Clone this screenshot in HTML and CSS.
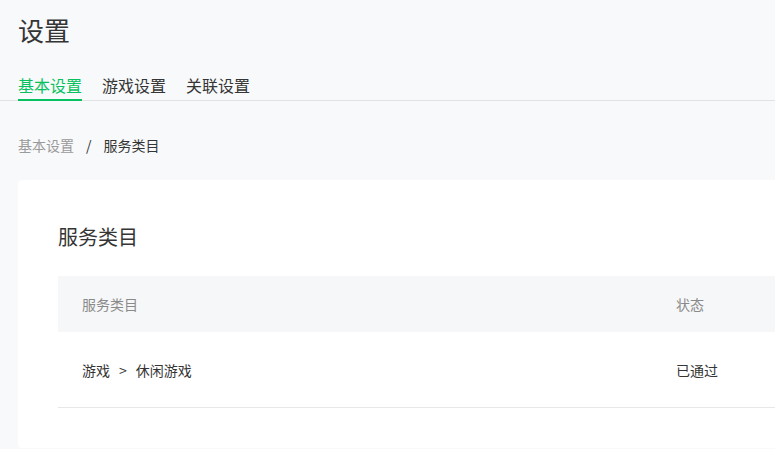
FILE: index.html
```html
<!DOCTYPE html>
<html lang="zh-CN">
<head>
<meta charset="utf-8">
<title>设置</title>
<link rel="stylesheet" href="styles.css">
</head>
<body>
<div class="page">
  <h1 class="page-title">设置</h1>
  <nav class="tabs">
    <a class="tab active">基本设置</a>
    <a class="tab">游戏设置</a>
    <a class="tab">关联设置</a>
  </nav>
  <div class="breadcrumb">
    <span class="crumb-link">基本设置</span>
    <span class="crumb-sep">/</span>
    <span class="crumb-current">服务类目</span>
  </div>
  <section class="card">
    <h2 class="card-title">服务类目</h2>
    <div class="table">
      <div class="row head">
        <div class="cell">服务类目</div>
        <div class="cell">状态</div>
      </div>
      <div class="row body">
        <div class="cell">游戏<span class="arrow">&gt;</span>休闲游戏</div>
        <div class="cell">已通过</div>
      </div>
    </div>
  </section>
</div>
</body>
</html>
```
FILE: styles.css
```css
html, body {
  margin: 0;
  padding: 0;
  background: #f8f9fa;
  overflow: hidden;
}
body {
  font-family: "Noto Sans CJK SC", "Noto Sans", sans-serif;
  color: #353535;
}
.page {
  width: 1000px;
  padding: 12px 0 0 18px;
}
.page-title {
  margin: 0;
  font-size: 26px;
  line-height: 36px;
  font-weight: 400;
  color: #353535;
}
.tabs {
  display: flex;
  gap: 20px;
  margin-top: 26px;
  margin-left: -18px;
  padding-left: 18px;
  border-bottom: 1px solid #e2e3e5;
}
.tab {
  font-size: 16px;
  line-height: 22px;
  padding-bottom: 3px;
  border-bottom: 2px solid transparent;
  margin-bottom: -1px;
  color: #353535;
}
.tab.active {
  color: #07c160;
  border-bottom-color: #07c160;
}
.breadcrumb {
  margin-top: 34px;
  font-size: 14px;
  line-height: 20px;
  display: flex;
  gap: 12px;
}
.crumb-link { color: #9a9a9a; }
.crumb-sep { color: #353535; }
.crumb-current { color: #353535; }
.card {
  margin-top: 25px;
  background: #fff;
  border-radius: 4px;
  padding: 43px 40px 40px;
}
.card-title {
  margin: 0;
  font-size: 20px;
  line-height: 28px;
  font-weight: 400;
  color: #353535;
}
.table {
  margin-top: 25px;
  font-size: 14px;
}
.row {
  display: grid;
  grid-template-columns: 594px 1fr;
}
.row .cell {
  padding-left: 24px;
  display: flex;
  align-items: center;
}
.row.head {
  height: 56px;
  background: #f6f7f8;
  color: #8a8a8a;
}
.row.body {
  height: 75px;
  border-bottom: 1px solid #e7e7e7;
  color: #353535;
}
.arrow {
  margin: 0 9px;
}
```
